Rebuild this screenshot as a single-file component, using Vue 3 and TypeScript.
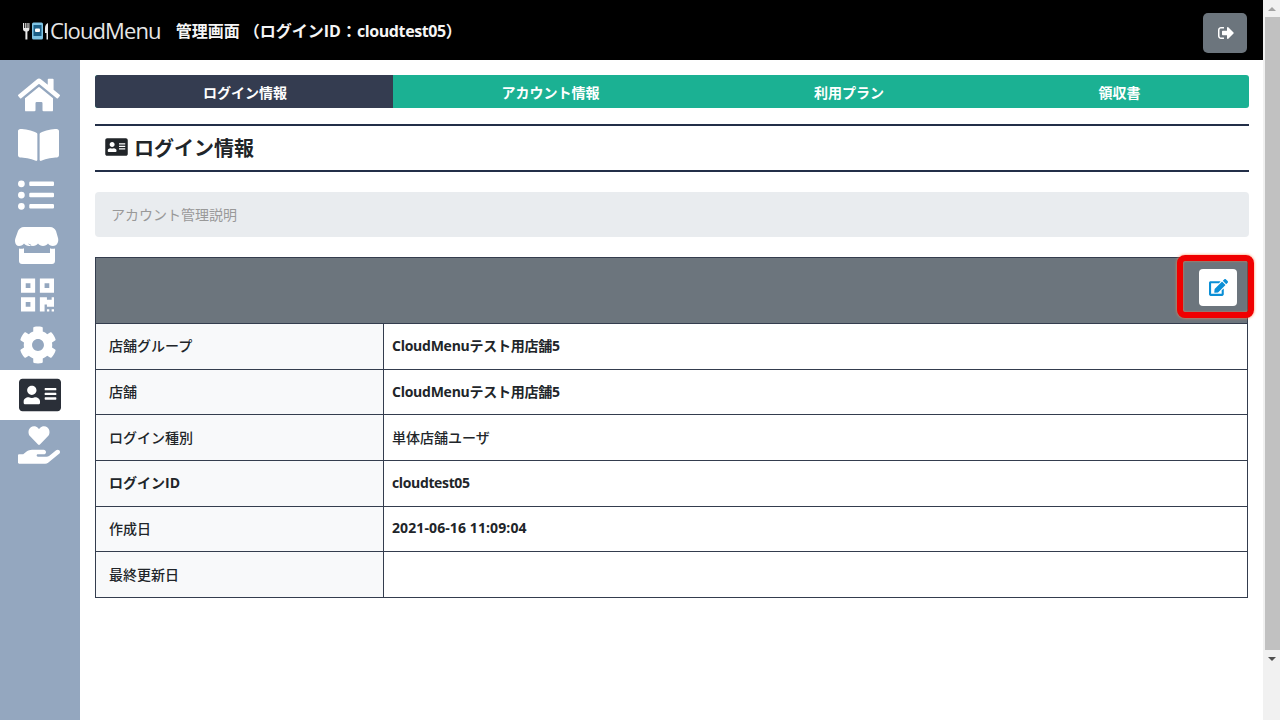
<script setup lang="ts">
interface NavItem { key: string; view: string; d: string; active?: boolean; w: number }
interface Row { label: string; value: string; bold: boolean; strongLabel?: boolean; spacing?: string }
const nav: NavItem[] = [
  { key: 'home', view: '0 0 576 512', w: 42, d: 'M280.37 148.26L96 300.11V464a16 16 0 0 0 16 16l112.06-.29a16 16 0 0 0 15.92-16V368a16 16 0 0 1 16-16h64a16 16 0 0 1 16 16v95.64a16 16 0 0 0 16 16.05L464 480a16 16 0 0 0 16-16V300L295.67 148.26a12.19 12.19 0 0 0-15.3 0zM571.6 251.47L488 182.56V44.05a12 12 0 0 0-12-12h-56a12 12 0 0 0-12 12v72.61L318.47 43a48 48 0 0 0-61 0L4.34 251.47a12 12 0 0 0-1.6 16.9l25.5 31A12 12 0 0 0 45.15 301l235.22-193.74a12.19 12.19 0 0 1 15.3 0L530.9 301a12 12 0 0 0 16.9-1.6l25.5-31a12 12 0 0 0-1.7-16.93z' },
  { key: 'book', view: '0 0 576 512', w: 41, d: 'M542.22 32.05c-54.8 3.11-163.72 14.43-230.96 55.59-4.64 2.84-7.27 7.89-7.27 13.17v363.87c0 11.55 12.63 18.85 23.28 13.49 69.18-34.82 169.23-44.32 218.7-46.92 16.89-.89 30.02-14.43 30.02-30.66V62.75c.01-17.71-15.35-31.74-33.77-30.7zM264.73 87.64C197.5 46.48 88.58 35.17 33.78 32.05 15.36 31.01 0 45.04 0 62.75V400.6c0 16.24 13.13 29.78 30.02 30.66 49.49 2.6 149.59 12.11 218.77 46.95 10.62 5.35 23.21-1.94 23.21-13.46V100.63c0-5.29-2.62-10.14-7.27-12.99z' },
  { key: 'list', view: '0 0 512 512', w: 36, d: 'M48 48a48 48 0 1 0 48 48 48 48 0 0 0-48-48zm0 160a48 48 0 1 0 48 48 48 48 0 0 0-48-48zm0 160a48 48 0 1 0 48 48 48 48 0 0 0-48-48zm448 16H176a16 16 0 0 0-16 16v32a16 16 0 0 0 16 16h320a16 16 0 0 0 16-16v-32a16 16 0 0 0-16-16zm0-320H176a16 16 0 0 0-16 16v32a16 16 0 0 0 16 16h320a16 16 0 0 0 16-16V80a16 16 0 0 0-16-16zm0 160H176a16 16 0 0 0-16 16v32a16 16 0 0 0 16 16h320a16 16 0 0 0 16-16v-32a16 16 0 0 0-16-16z' },
  { key: 'store', view: '0 0 44 38', w: 44, d: 'M9 1h26c3 0 5 2 6 4l2 7c1 4-1 8-5 8-2.500 0-4-1-5-2.500-1 1.500-3 2.500-5 2.500s-4-1-5-2.500c-1 1.500-3 2.500-5 2.500s-4-1-5-2.500C18 19 16 20 14 20s-4-1-5-2.500C8 19 6.500 20 4 20c-3 0-5-4-3.500-8L3 5c1-2 3-4 6-4zM4 22.500c1.800.4 3.600.3 5-.3V27h26v-4.800c1.400.6 3.200.7 5 .3V35c0 1.700-1.300 3-3 3H7c-1.700 0-3-1.300-3-3z' },
  { key: 'qr', view: '0 0 448 512', w: 33, d: 'M0 224h192V32H0v192zM64 96h64v64H64V96zm192-64v192h192V32H256zm128 128h-64V96h64v64zM0 480h192V288H0v192zm64-128h64v64H64v-64zm352-64h32v128h-96v-32h-32v96h-64V288h96v32h64v-32zm0 160h32v32h-32v-32zm-64 0h32v32h-32v-32z' },
  { key: 'cog', view: '0 0 512 512', w: 38, d: 'M487.4 315.7l-42.6-24.6c4.3-23.2 4.3-47 0-70.2l42.6-24.6c4.900-2.800 7.100-8.600 5.500-14-11.100-35.600-30-67.800-54.700-94.600-3.800-4.100-10-5.100-14.800-2.300L380.800 110c-17.900-15.400-38.500-27.300-60.800-35.100V25.800c0-5.600-3.900-10.500-9.400-11.700-36.700-8.200-74.300-7.800-109.200 0-5.500 1.200-9.400 6.100-9.400 11.700V75c-22.200 7.900-42.800 19.800-60.800 35.100L88.700 85.500c-4.900-2.800-11-1.900-14.800 2.300-24.700 26.700-43.600 58.900-54.700 94.600-1.700 5.400.6 11.200 5.500 14L67.300 221c-4.300 23.200-4.300 47 0 70.200l-42.6 24.600c-4.900 2.800-7.100 8.600-5.500 14 11.100 35.600 30 67.800 54.700 94.600 3.800 4.100 10 5.100 14.800 2.300l42.600-24.600c17.900 15.400 38.500 27.300 60.800 35.100v49.200c0 5.600 3.900 10.500 9.400 11.700 36.700 8.200 74.300 7.800 109.200 0 5.500-1.200 9.400-6.100 9.400-11.700v-49.200c22.200-7.900 42.800-19.800 60.800-35.100l42.600 24.600c4.900 2.800 11 1.900 14.800-2.300 24.700-26.700 43.600-58.900 54.700-94.600 1.500-5.500-.7-11.300-5.600-14.100zM256 336c-44.100 0-80-35.900-80-80s35.900-80 80-80 80 35.900 80 80-35.900 80-80 80z' },
  { key: 'card', view: '0 0 576 512', w: 42, active: true, d: 'M528 32H48C21.500 32 0 53.500 0 80v352c0 26.500 21.500 48 48 48h480c26.500 0 48-21.500 48-48V80c0-26.500-21.500-48-48-48zm-352 96c35.300 0 64 28.700 64 64s-28.700 64-64 64-64-28.700-64-64 28.700-64 64-64zm112 236.800c0 10.600-10 19.200-22.400 19.200H86.400C74 384 64 375.400 64 364.800v-19.200c0-31.800 30.100-57.600 67.200-57.600h5c12.300 5.100 25.700 8 39.800 8s27.600-2.900 39.800-8h5c37.100 0 67.200 25.800 67.200 57.600v19.200zM512 312c0 4.400-3.600 8-8 8H360c-4.400 0-8-3.600-8-8v-16c0-4.400 3.600-8 8-8h144c4.400 0 8 3.600 8 8v16zm0-64c0 4.400-3.600 8-8 8H360c-4.400 0-8-3.600-8-8v-16c0-4.400 3.600-8 8-8h144c4.400 0 8 3.600 8 8v16zm0-64c0 4.400-3.600 8-8 8H360c-4.400 0-8-3.600-8-8v-16c0-4.400 3.600-8 8-8h144c4.400 0 8 3.600 8 8v16z' },
  { key: 'hand', view: '0 0 576 512', w: 42, d: 'M275.300 250.500c7 7.400 18.400 7.400 25.500 0l108.900-114.200c31.600-33.200 29.800-88.200-5.600-118.800-30.800-26.700-76.700-21.900-104.900 7.700L288 36.900l-11.100-11.600C248.700-4.400 202.800-9.200 172 17.500c-35.300 30.600-37.200 85.600-5.600 118.800l108.900 114.200zm290 77.600c-11.800-10.700-30.200-10-42.600 0L430.300 402c-11.300 9.100-25.400 14-40 14H272c-8.800 0-16-7.200-16-16s7.200-16 16-16h78.300c15.900 0 30.700-10.900 33.300-26.600 3.300-20-12.100-37.400-31.600-37.400H192c-27 0-53.100 9.300-74.100 26.300L71.400 384H16c-8.800 0-16 7.200-16 16v96c0 8.800 7.200 16 16 16h356.800c14.500 0 28.600-4.900 40-14l151.200-121c15.200-12.100 16.400-35 2.300-48.900z' },
]
const cardIcon = nav[6].d
const tabs = ['ログイン情報', 'アカウント情報', '利用プラン', '領収書']
const rows: Row[] = [
  { label: '店舗グループ', value: 'CloudMenuテスト用店舗5', bold: true, spacing: 'tight' },
  { label: '店舗', value: 'CloudMenuテスト用店舗5', bold: true, spacing: 'tight' },
  { label: 'ログイン種別', value: '単体店舗ユーザ', bold: false },
  { label: 'ログインID', value: 'cloudtest05', bold: true, strongLabel: true, spacing: 'tighter' },
  { label: '作成日', value: '2021-06-16 11:09:04', bold: true, spacing: 'wide' },
  { label: '最終更新日', value: '', bold: false },
]
</script>

<template>
  <div class="screen">
    <div class="page">
      <header class="topbar">
        <div class="brand">
          <svg class="logo-mark" viewBox="0 0 26 18" width="26" height="18" aria-hidden="true">
            <path fill="#e8e8e8" d="M0 1h1v5h.8V1h1v5h.8V1h1v5h.8V1h1v6c0 1.500-1 2.300-2 2.500V17.500H2.400V9.500C1 9.300 0 8.500 0 7z" />
            <rect x="9" y="0.500" width="11" height="17" rx="1.500" fill="#7fc4e4" />
            <rect x="10.500" y="3" width="8" height="11" fill="#1c5f86" />
            <rect x="12" y="6.500" width="5" height="3.500" rx="1" fill="#fff" />
            <path fill="#e8e8e8" d="M25 1v16.500h-1.500V11h-1.500V6c0-2.500 1.500-4.500 3-5z" />
          </svg>
          <span class="logo-text">CloudMenu</span>
        </div>
        <div class="title">管理画面 （ログインID：<span class="title-id">cloudtest05</span>）</div>
        <button class="logout" type="button" aria-label="ログアウト">
          <svg viewBox="0 0 512 512" width="16" height="16" aria-hidden="true">
            <path fill="#fff" d="M497 273L329 441c-15 15-41 4.500-41-17v-96H152c-13.300 0-24-10.700-24-24v-96c0-13.300 10.700-24 24-24h136V88c0-21.400 25.900-32 41-17l168 168c9.300 9.400 9.300 24.600 0 34zM192 436v-24c0-6.600-5.400-12-12-12H96c-26.500 0-48-21.500-48-48V160c0-26.500 21.500-48 48-48h84c6.600 0 12-5.400 12-12V76c0-6.600-5.400-12-12-12H96c-53 0-96 43-96 96v192c0 53 43 96 96 96h84c6.600 0 12-5.400 12-12z" />
          </svg>
        </button>
      </header>

      <div class="body">
        <nav class="sidebar">
          <div v-for="item in nav" :key="item.key" class="nav-item" :class="[item.key, { active: item.active }]">
            <svg :viewBox="item.view" :width="item.w" height="38" aria-hidden="true">
              <path fill="currentColor" :d="item.d" fill-rule="evenodd" />
            </svg>
          </div>
        </nav>

        <main class="content">
          <div class="tabs">
            <div v-for="(tab, i) in tabs" :key="tab" class="tab" :class="{ current: i === 0 }">{{ tab }}</div>
          </div>

          <h1 class="heading">
            <svg viewBox="0 0 576 512" width="23" height="20" aria-hidden="true">
              <path fill="#212529" :d="cardIcon" />
            </svg>
            <span>ログイン情報</span>
          </h1>

          <div class="notice">アカウント管理説明</div>

          <section class="panel">
            <div class="panel-head">
              <button class="edit" type="button" aria-label="編集">
                <svg viewBox="0 0 576 512" width="19" height="17" aria-hidden="true">
                  <path fill="#0b8fd6" d="M402.600 83.200l90.200 90.200c3.800 3.800 3.800 10 0 13.800L274.400 405.600l-92.800 10.300c-12.400 1.400-22.900-9.100-21.500-21.500l10.300-92.800L388.800 83.200c3.800-3.800 10-3.800 13.800 0zm162-22.900l-48.800-48.800c-15.200-15.200-39.900-15.200-55.200 0l-35.400 35.400c-3.800 3.800-3.800 10 0 13.800l90.200 90.200c3.800 3.800 10 3.800 13.800 0l35.400-35.400c15.200-15.300 15.200-40 0-55.200zM384 346.200V448H64V128h229.800c3.200 0 6.200-1.300 8.500-3.500l40-40c7.600-7.600 2.200-20.500-8.500-20.500H48C21.500 64 0 85.500 0 112v352c0 26.500 21.500 48 48 48h352c26.500 0 48-21.500 48-48V306.200c0-10.700-12.900-16-20.500-8.500l-40 40c-2.200 2.300-3.500 5.300-3.500 8.500z" />
                </svg>
              </button>
              <div class="highlight"></div>
            </div>
            <div v-for="row in rows" :key="row.label" class="row">
              <div class="label" :class="{ strong: row.strongLabel }">{{ row.label }}</div>
              <div class="value" :class="[{ strong: row.bold }, row.spacing]">{{ row.value }}</div>
            </div>
          </section>
        </main>
      </div>
    </div>

    <div class="scrollbar">
      <div class="arrow up"></div>
      <div class="thumb"></div>
      <div class="arrow down"></div>
    </div>
  </div>
</template>

<style>
html, body { margin: 0; overflow: hidden; background: #fff; }
</style>

<style scoped>
.screen {
  display: flex;
  width: 1280px;
  height: 720px;
  overflow: hidden;
  font-family: "Open Sans", "Noto Sans CJK JP", sans-serif;
  color: #212529;
}
.page { flex: 0 0 1263px; display: flex; flex-direction: column; min-width: 0; }

.topbar {
  flex: 0 0 60px;
  display: flex;
  align-items: center;
  padding: 0 16px 0 23px;
  background: #000;
  color: #fff;
  box-sizing: border-box;
}
.brand { display: flex; align-items: center; gap: 1px; }
.logo-mark { margin-top: 1px; }
.logo-text { font-family: "Open Sans", sans-serif; font-weight: 400; font-size: 22px; letter-spacing: -0.9px; color: #e6e6e6; }
.title { margin-left: 15px; font-size: 16px; font-weight: 700; white-space: pre; color: #f5f5f5; }
.title-id { letter-spacing: -0.4px; }
.logout {
  margin-left: auto;
  width: 44px;
  height: 40px;
  margin-top: 5px;
  border: 0;
  border-radius: 5px;
  background: #6c757d;
  display: flex;
  align-items: center;
  justify-content: center;
  padding: 0 0 0 2px;
}

.body { flex: 1; display: flex; min-height: 0; }
.sidebar { flex: 0 0 80px; background: #94a7bf; padding-top: 10px; box-sizing: border-box; }
.nav-item { height: 50px; display: flex; align-items: center; justify-content: center; padding-right: 3px; box-sizing: border-box; color: #fff; }
.nav-item.active { background: #fff; color: #2a2f38; }
.nav-item.list { padding-right: 9px; }
.nav-item.store { padding-right: 7px; }
.nav-item.qr, .nav-item.cog { padding-right: 5px; }
.nav-item.card { padding-right: 1px; }

.content { flex: 1; min-width: 0; padding: 15px 14px 0 15px; }
.tabs {
  display: grid;
  grid-template-columns: 298px 315px 282px 1fr;
  height: 33px;
  border-radius: 3px;
  overflow: hidden;
  background: #1bb193;
}
.tab {
  display: flex;
  align-items: center;
  justify-content: center;
  font-size: 14px;
  font-weight: 700;
  color: #fff;
}
.tab.current { background: #343c50; padding-left: 2px; }

.heading {
  display: flex;
  align-items: center;
  gap: 6px;
  margin: 16px 0 0;
  padding: 0 0 2px 10px;
  height: 42px;
  border-top: 2px solid #232f48;
  border-bottom: 2px solid #232f48;
  font-size: 20px;
  font-weight: 700;
  color: #212529;
}
.notice {
  height: 45px;
  margin-top: 20px;
  padding: 0 0 2px 16px;
  box-sizing: border-box;
  display: flex;
  align-items: center;
  border-radius: 4px;
  background: #e9ecef;
  font-size: 14px;
  color: #999;
}

.panel { margin: 20px 1px 0 0; border: 1px solid #343d4e; }
.panel-head {
  position: relative;
  height: 65px;
  box-sizing: border-box;
  background: #6c757d;
  display: flex;
  align-items: center;
  justify-content: flex-end;
  padding: 0 10px 7px 0;
}
.edit {
  width: 38px;
  height: 37px;
  border: 0;
  border-radius: 4px;
  background: #fff;
  display: flex;
  align-items: center;
  justify-content: center;
  padding: 0;
}
.highlight {
  position: absolute;
  top: -3px;
  right: -7px;
  width: 65px;
  height: 51px;
  border: 6px solid #f00000;
  border-radius: 8px;
  box-shadow: 0 0 3px #ff8a50, inset 0 0 2px #ff8a50;
  pointer-events: none;
}
.row {
  display: grid;
  grid-template-columns: 288px 1fr;
  height: 45.667px;
  box-sizing: border-box;
  border-top: 1px solid #343d4e;
  font-size: 14px;
}
.label {
  display: flex;
  align-items: center;
  padding: 0 0 2px 13px;
  background: #f8f9fa;
  border-right: 1px solid #343d4e;
  font-weight: 500;
}
.value { display: flex; align-items: center; padding: 0 0 2px 8px; font-weight: 500; }
.strong { font-weight: 700; }
.tight { letter-spacing: -0.25px; }
.tighter { letter-spacing: -0.36px; }
.wide { letter-spacing: 0.1px; }

.scrollbar {
  flex: 0 0 17px;
  display: flex;
  flex-direction: column;
  background: #f1f1f1;
}
.arrow { flex: 0 0 17px; display: flex; align-items: center; justify-content: center; }
.arrow::before {
  content: "";
  border-left: 4px solid transparent;
  border-right: 4px solid transparent;
}
.arrow.up::before { border-bottom: 4px solid #a3a3a3; }
.arrow.down::before { border-top: 4px solid #505050; }
.thumb { flex: 0 0 633px; margin-left: 2px; background: #c1c1c1; }
</style>
